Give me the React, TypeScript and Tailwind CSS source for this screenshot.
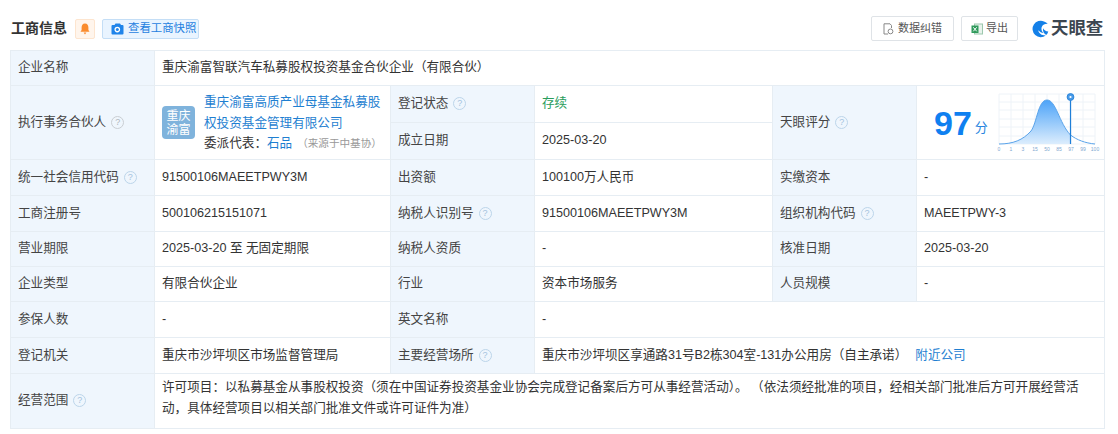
import React from 'react';

function Help({ gray }: { gray?: boolean }) {
  return (
    <span
      className={`inline-flex items-center justify-center w-[13px] h-[13px] ml-[5px] rounded-full border text-[9px] leading-none align-[1px] ${
        gray ? 'border-[#c9ced3] text-[#b0b6bc]' : 'border-[#bcd5ea] text-[#a5c3dd]'
      }`}
    >
      ?
    </span>
  );
}

function Label({ text, help, gray, rowSpan }: { text: string; help?: boolean; gray?: boolean; rowSpan?: number }) {
  return (
    <td rowSpan={rowSpan} className="border border-[#e6edf3] bg-[#eff6fd] pl-[7px] pb-[1px] text-[#444]">
      {text}
      {help && <Help gray={gray} />}
    </td>
  );
}

function Value({ children, colSpan }: { children: React.ReactNode; colSpan?: number }) {
  return (
    <td colSpan={colSpan} className="border border-[#e6edf3] pl-[7px] pb-[1px] text-[#333]">
      {children}
    </td>
  );
}

function ScoreChart() {
  const xs = ['0', '1', '3', '15', '50', '85', '97', '99', '100'];
  return (
    <svg width="112" height="66" viewBox="0 0 112 66" className="block">
      <defs>
        <linearGradient id="bell" x1="0" y1="0" x2="0" y2="1">
          <stop offset="0" stopColor="#4ca3f8" />
          <stop offset="1" stopColor="#dcedfd" />
        </linearGradient>
      </defs>
      {[4, 12, 20, 29, 37, 46, 54].map((y) => (
        <line key={y} x1="6" x2="102" y1={y} y2={y} stroke="#eef3f8" />
      ))}
      {[6, 18, 30, 42, 54, 66, 78, 90, 102].map((x) => (
        <line key={x} x1={x} x2={x} y1="4" y2="54" stroke="#eef3f8" />
      ))}
      <path d="M6 54 C20 54 30 50 38 41 C44 33 45 10 54 10 C63 10 66 33 77.5 45 L77.5 54 Z" fill="url(#bell)" />
      <path d="M6 54 C20 54 30 50 38 41 C44 33 45 10 54 10 C63 10 66 33 77.5 45 C84 50 92 53 102 54" fill="none" stroke="#5ba4ea" strokeWidth="1" />
      <line x1="77.5" x2="77.5" y1="9" y2="54" stroke="#1f7fd8" strokeWidth="1.2" />
      <circle cx="77.5" cy="7" r="3.4" fill="#4a9be8" stroke="#2b86dc" />
      <circle cx="77.5" cy="7" r="1.1" fill="#fff" />
      {xs.map((t, i) => (
        <text key={t} x={6 + i * 12} y="61" fontSize="5" textAnchor="middle" fill="#7fa8cf" fontFamily="Liberation Sans">
          {t}
        </text>
      ))}
    </svg>
  );
}

export default function App() {
  return (
    <div
      className="w-[1118px] h-[434px] overflow-hidden bg-white pl-[10px] text-[12.6px]"
      style={{ fontFamily: '"Liberation Sans", "Noto Sans CJK SC", sans-serif' }}
    >
      {/* Header */}
      <div className="flex items-center w-[1095px] h-[50px] pt-[7px]">
        <span className="text-[14px] font-bold text-[#333] ml-px">工商信息</span>
        <span className="flex items-center justify-center w-[20px] h-[20px] ml-[8px] rounded-[2px] border border-[#fde5cf] bg-[#fff5ec]">
          <svg width="10" height="12" viewBox="0 0 10 12">
            <path d="M5 0.5 C2.6 0.5 1.6 2.4 1.6 4.5 L1.6 7 L0.5 8.8 L9.5 8.8 L8.4 7 L8.4 4.5 C8.4 2.4 7.4 0.5 5 0.5 Z M3.6 9.6 L6.4 9.6 L5 11.4 Z" fill="#fa8c2e" />
          </svg>
        </span>
        <span className="flex items-center h-[20px] w-[97px] ml-[7px] pl-[8px] rounded-[2px] border border-[#c4def6] bg-[#e9f4ff] text-[11.4px] text-[#1f7fe0] whitespace-nowrap">
          <svg width="13" height="12" viewBox="0 0 13 12" className="mr-[4px] shrink-0">
            <path d="M1.5 2 H3.5 L4.5 0.5 H9 L10 2 H11.5 Q12.5 2 12.5 3 V10.5 Q12.5 11.5 11.5 11.5 H1.5 Q0.5 11.5 0.5 10.5 V3 Q0.5 2 1.5 2 Z" fill="#1f84ea" />
            <circle cx="6.3" cy="6.6" r="2.8" fill="#fff" />
            <circle cx="6.3" cy="6.6" r="1.5" fill="#1f84ea" />
          </svg>
          查看工商快照
        </span>
        <span className="flex items-center justify-center w-[83px] h-[25px] ml-auto rounded-[2px] border border-[#dfe3e7] text-[11px] text-[#555]">
          <svg width="11" height="12" viewBox="0 0 11 12" className="mr-[4px]">
            <path d="M5 11 H1 V.8 H7 L8.5 2.5 V5" fill="none" stroke="#888" />
            <circle cx="7.5" cy="8.4" r="2.4" fill="none" stroke="#888" />
          </svg>
          数据纠错
        </span>
        <span className="flex items-center justify-center w-[57px] h-[25px] ml-[7px] rounded-[2px] border border-[#dfe3e7] text-[11px] text-[#555]">
          <svg width="12" height="12" viewBox="0 0 12 12" className="mr-[3px]">
            <rect x="3.5" y="1" width="8" height="10" fill="#e8f3ec" stroke="#9cc8ae" />
            <rect x="0.5" y="2.5" width="7" height="7.5" fill="#2f9a5b" />
            <path d="M2.3 4.3 L5.7 8.3 M5.7 4.3 L2.3 8.3" stroke="#fff" />
          </svg>
          导出
        </span>
        <span className="flex items-center ml-[13px] w-[74px] shrink-0">
          <svg width="18" height="18" viewBox="0 0 18 18" className="shrink-0">
            <path d="M13 1.4 A8.2 8.2 0 1 0 14.8 15.4 C10.8 15.6 8 13.5 7.2 10.2 C8.8 11.9 10.4 12.8 12.4 12.9 C10.4 11 9.9 8.4 11 6.4 C12 4.6 14 3.6 16.8 3.8 C15.8 2.7 14.6 1.9 13 1.4 Z" fill="#1480e8" />
            <path d="M12 8.2 C13 10 14.8 11.3 17.3 11.6 C16.9 13 16.2 14.1 15.2 14.9 C12.8 13.6 11.6 11 12 8.2 Z" fill="#1480e8" />
          </svg>
          <span className="ml-[2px] text-[17.4px] leading-none font-bold text-[#3c4650] whitespace-nowrap">天眼查</span>
        </span>
      </div>

      {/* Info table */}
      <table className="table-fixed border-collapse w-[1094px]">
        <colgroup>
          <col className="w-[144px]" />
          <col className="w-[236px]" />
          <col className="w-[144px]" />
          <col className="w-[238px]" />
          <col className="w-[144px]" />
          <col className="w-[188px]" />
        </colgroup>
        <tbody>
          <tr className="h-[35px]">
            <Label text="企业名称" />
            <Value colSpan={5}>重庆渝富智联汽车私募股权投资基金合伙企业（有限合伙）</Value>
          </tr>
          <tr className="h-[37px]">
            <Label text="执行事务合伙人" help gray rowSpan={2} />
            <td rowSpan={2} className="border border-[#e6edf3] pl-[7px] pr-[4px]">
              <div className="flex items-center">
                <span className="flex items-center justify-center shrink-0 w-[33px] h-[33px] mr-[9px] rounded-[4px] bg-[#7fb3dc] text-white text-[12px] leading-[14px] text-center">
                  重庆
                  <br />
                  渝富
                </span>
                <div className="leading-[19px] -mt-[1px]">
                  <div className="text-[#1f7fd1] leading-[21px]">重庆渝富高质产业母基金私募股权投资基金管理有限公司</div>
                  <div className="whitespace-nowrap text-[#333]">
                    委派代表：<span className="text-[#1f7fd1]">石品</span>
                    <span className="ml-[5px] text-[10.6px] text-[#999]">（来源于中基协）</span>
                  </div>
                </div>
              </div>
            </td>
            <Label text="登记状态" help />
            <Value>
              <span className="text-[#2a9d5c]">存续</span>
            </Value>
            <Label text="天眼评分" help rowSpan={2} />
            <td rowSpan={2} className="border border-[#e6edf3]">
              <div className="flex items-center pl-[17px]">
                <span className="text-[34px] leading-none font-bold text-[#0f80f0]">97</span>
                <span className="ml-[3px] mt-[10px] text-[13px] text-[#2a86e0]">分</span>
                <span className="ml-[5px]">
                  <ScoreChart />
                </span>
              </div>
            </td>
          </tr>
          <tr className="h-[37px]">
            <Label text="成立日期" />
            <Value>2025-03-20</Value>
          </tr>
          <tr className="h-[36px]">
            <Label text="统一社会信用代码" help />
            <Value>91500106MAEETPWY3M</Value>
            <Label text="出资额" />
            <Value>100100万人民币</Value>
            <Label text="实缴资本" />
            <Value>-</Value>
          </tr>
          <tr className="h-[36px]">
            <Label text="工商注册号" />
            <Value>500106215151071</Value>
            <Label text="纳税人识别号" help />
            <Value>91500106MAEETPWY3M</Value>
            <Label text="组织机构代码" help />
            <Value>MAEETPWY-3</Value>
          </tr>
          <tr className="h-[35px]">
            <Label text="营业期限" />
            <Value>2025-03-20 至 无固定期限</Value>
            <Label text="纳税人资质" />
            <Value>-</Value>
            <Label text="核准日期" />
            <Value>2025-03-20</Value>
          </tr>
          <tr className="h-[35px]">
            <Label text="企业类型" />
            <Value>有限合伙企业</Value>
            <Label text="行业" />
            <Value>资本市场服务</Value>
            <Label text="人员规模" />
            <Value>-</Value>
          </tr>
          <tr className="h-[36px]">
            <Label text="参保人数" />
            <Value>-</Value>
            <Label text="英文名称" />
            <Value colSpan={3}>-</Value>
          </tr>
          <tr className="h-[36px]">
            <Label text="登记机关" />
            <Value>重庆市沙坪坝区市场监督管理局</Value>
            <Label text="主要经营场所" help />
            <Value colSpan={3}>
              重庆市沙坪坝区享通路31号B2栋304室-131办公用房（自主承诺）
              <span className="ml-[8px] text-[#1f7fd1]">附近公司</span>
            </Value>
          </tr>
          <tr className="h-[55px]">
            <Label text="经营范围" help />
            <td colSpan={5} className="border border-[#e6edf3] pl-[7px] pr-[8px] align-top pt-[3px] leading-[21px] text-[#333]">
              许可项目：以私募基金从事股权投资（须在中国证券投资基金业协会完成登记备案后方可从事经营活动）。 （依法须经批准的项目，经相关部门批准后方可开展经营活动，具体经营项目以相关部门批准文件或许可证件为准）
            </td>
          </tr>
        </tbody>
      </table>
    </div>
  );
}
